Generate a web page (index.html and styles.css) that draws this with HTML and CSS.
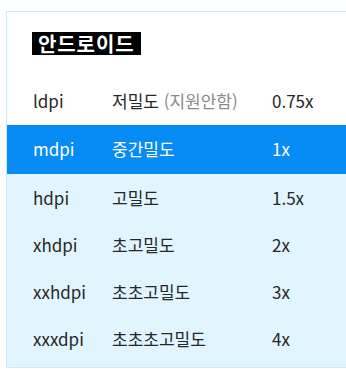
FILE: index.html
```html
<!DOCTYPE html>
<html lang="ko">
<head>
<meta charset="utf-8">
<link rel="stylesheet" href="styles.css">
</head>
<body>
<div class="card">
  <div class="head">
    <h2 class="title">안드로이드</h2>
  </div>
  <div class="row first">
    <span class="c1">ldpi</span><span class="c2">저밀도 <span class="muted">(지원안함)</span></span><span class="c3">0.75x</span>
  </div>
  <div class="row active">
    <span class="c1">mdpi</span><span class="c2">중간밀도</span><span class="c3">1x</span>
  </div>
  <div class="row">
    <span class="c1">hdpi</span><span class="c2">고밀도</span><span class="c3">1.5x</span>
  </div>
  <div class="row">
    <span class="c1">xhdpi</span><span class="c2">초고밀도</span><span class="c3">2x</span>
  </div>
  <div class="row">
    <span class="c1">xxhdpi</span><span class="c2">초초고밀도</span><span class="c3">3x</span>
  </div>
  <div class="row">
    <span class="c1">xxxdpi</span><span class="c2">초초초고밀도</span><span class="c3">4x</span>
  </div>
</div>
</body>
</html>
```

FILE: styles.css
```css
html, body {
  margin: 0;
  padding: 0;
  background: #ffffff;
}
body {
  font-family: "Noto Sans CJK KR", "Noto Sans", sans-serif;
  color: #262626;
  overflow: hidden;
}
.card {
  margin: 11px 0 0 6px;
  border: 1px solid #c9ebfb;
  border-right: none;
  background: #e1f5fe;
  padding-bottom: 5px;
}
.head {
  background: #ffffff;
  padding: 20px 0 20px 25px;
}
.title {
  display: inline-block;
  margin: 0;
  padding: 0 6px;
  background: #000000;
  color: #ffffff;
  font-size: 20px;
  font-weight: 700;
  line-height: 23px;
  letter-spacing: 0.9px;
}
.row {
  display: grid;
  grid-template-columns: 79px 160px auto;
  padding-left: 26px;
  height: 47px;
  line-height: 47px;
  font-size: 17px;
}
.row.first {
  background: #ffffff;
  height: 48px;
}
.row.active {
  background: #078cf5;
  color: #ffffff;
  height: 49px;
}
.muted {
  color: #8a8a8a;
}
```
